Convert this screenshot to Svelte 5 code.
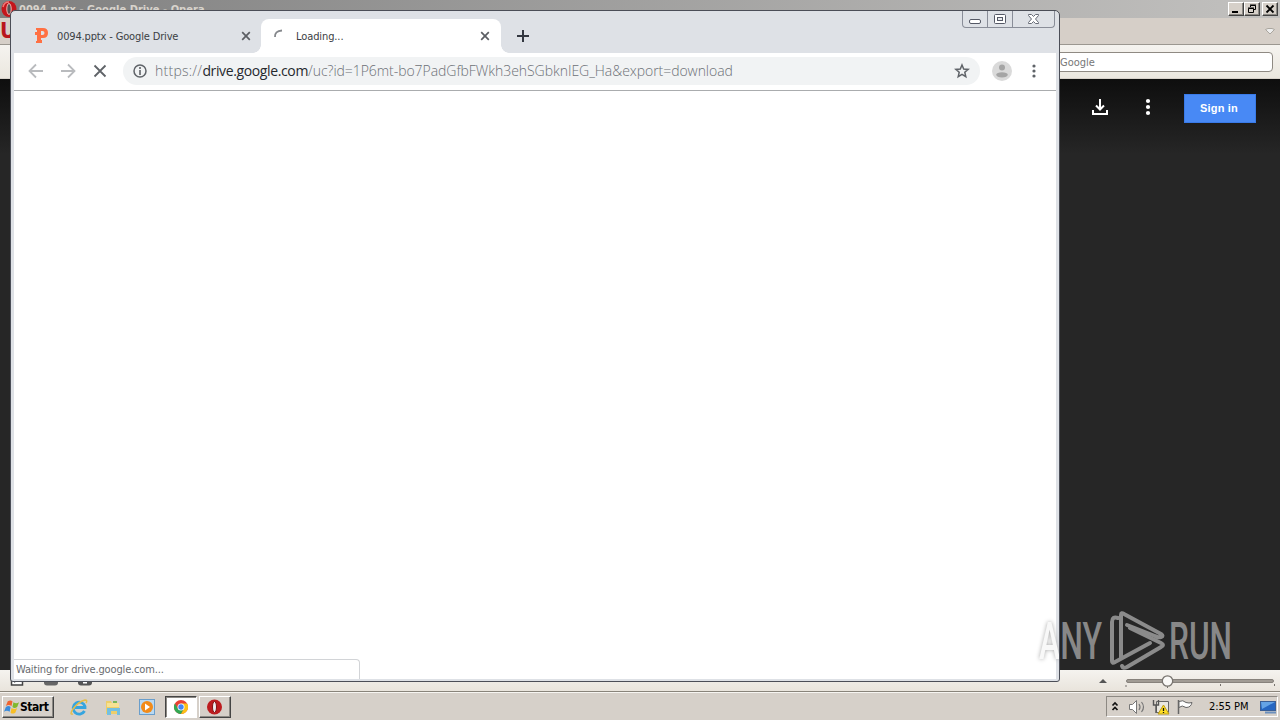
<script lang="ts">
	const url = {
		scheme: 'https://',
		host: 'drive.google.com',
		path: '/uc?id=1P6mt-bo7PadGfbFWkh3ehSGbknIEG_Ha&export=download'
	};
</script>

<div class="desktop">
	<div class="opera">
		<header class="opera-title">
			<svg class="opera-logo" width="18" height="18" viewBox="0 0 18 18">
				<ellipse cx="9" cy="9" rx="7.5" ry="8" fill="#c4161c" />
				<path d="M3 7q1-5 6-5" fill="none" stroke="#ee7b78" stroke-width="1.500" />
				<ellipse cx="9" cy="9" rx="2.2" ry="5.5" fill="#555" stroke="#f9b3b0" />
			</svg>
			<span class="opera-name">0094.pptx - Google Drive - Opera</span>
			<div class="opera-controls">
				<button aria-label="Minimize"><svg width="14" height="12"><path d="M3 9h6" stroke="#000" stroke-width="2" /></svg></button>
				<button aria-label="Restore"><svg width="14" height="12"><path d="M5.500 4V2.500h5v4H9M3.500 5.500h5v4h-5zM5 2h6M3 5h6" fill="none" stroke="#000" /></svg></button>
				<button class="gap" aria-label="Close"><svg width="14" height="12"><path d="M3.500 2.500l7 7M10.500 2.500l-7 7" stroke="#000" stroke-width="1.800" /></svg></button>
			</div>
		</header>
		<div class="opera-tabs">
			<span class="opera-menu">U</span>
			<svg width="12" height="8" viewBox="0 0 12 8"><path d="M1.500 2.500L4 1.500h4l2.500 1L6 7z" fill="#eee" stroke="#aaa69f" /></svg>
		</div>
		<div class="opera-toolbar"><div class="search">Google</div></div>
		<main class="viewer">
			<svg class="download" width="20" height="20" viewBox="0 0 20 20"><path d="M10 2v10M6 8.500l4 4 4-4M3 13v4h14v-4" fill="none" stroke="#fff" stroke-width="2" /></svg>
			<svg class="more" width="6" height="18" viewBox="0 0 6 18" fill="#fff"><circle cx="3" cy="3" r="2.100" /><circle cx="3" cy="9" r="2.100" /><circle cx="3" cy="15" r="2.100" /></svg>
			<button class="signin">Sign in</button>
		</main>
		<footer class="opera-status">
			<svg class="status-icons" width="100" height="21">
				<path d="M11.500 5h11v10h-11zM14 12l5-3" fill="#fff" stroke="#444" stroke-width="1.500" />
				<rect x="44" y="5" width="14" height="10.500" rx="3" fill="#666" />
				<rect x="78" y="5" width="14" height="10.500" rx="3" fill="#555" />
				<path d="M83 12.500h4" stroke="#fff" stroke-width="2" />
			</svg>
			<svg class="zoom-slider" width="185" height="21" viewBox="0 0 185 21">
				<path d="M4 13l4-4 4 4z" fill="#555" />
				<rect x="31.500" y="9.500" width="147" height="3" rx="1.500" fill="#a09b94" stroke="#87827c" />
				<path d="M31 15v2M72.500 15v3M125.500 14v2M179.500 14v2" stroke="#77736e" />
				<circle cx="72.500" cy="11" r="5.200" fill="#faf9f7" stroke="#77736e" stroke-width="1.300" />
			</svg>
		</footer>
	</div>

	<div class="taskbar">
		<button class="start">
			<svg width="16" height="16" viewBox="0 0 17 16">
				<path d="M4 2q3-2 5 0L8 7Q5 5 2 7z" fill="#ef6431" />
				<path d="M10 3q3 2 6 0l-2 5q-3 2-5 0z" fill="#80b82d" />
				<path d="M2 8q3-2 5 0l-1 5Q3 11 0 13z" fill="#398bdc" />
				<path d="M8 9q3 2 6 0l-2 5q-3 2-5 0z" fill="#f8be25" />
			</svg>
			<span>Start</span>
		</button>
		<div class="quick">
			<svg width="18" height="18" viewBox="0 0 18 18">
				<path d="M14.500 13A6 6 0 1 1 15 8.500v1H5" fill="none" stroke="#36a5df" stroke-width="2.800" />
				<path d="M3 16Q-1 17 3 11 8 4 15 2q3 0 1 3" fill="none" stroke="#e6bd47" stroke-width="1.400" />
			</svg>
			<svg width="18" height="18" viewBox="0 0 18 18">
				<path d="M2 3h5l1 2h7v11H2z" fill="#edce6a" />
				<path d="M3 6h12M3 8h12" stroke="#fff5bd" />
				<path d="M3 10h13v7h-3v-4H7v4H3z" fill="#73bfe2" />
				<path d="M9 3h4v2H9z" fill="#79b55b" />
			</svg>
			<svg width="18" height="18" viewBox="0 0 18 18">
				<rect x="1.500" y="1.500" width="15" height="15" fill="#b9d9f2" stroke="#6a9ecb" />
				<circle cx="9" cy="9" r="6" fill="#f28b19" />
				<path d="M7 5.500v7L12 9z" fill="#fff" />
			</svg>
		</div>
		<div class="task pressed">
			<svg width="16" height="16" viewBox="0 0 16 16">
				<circle cx="8" cy="8" r="7" fill="#e84133" />
				<path d="M1.900 4.500A7 7 0 0 0 8 15l3-5.300H5z" fill="#31a853" />
				<path d="M8 15a7 7 0 0 0 6.100-10.500H8l3 5.200z" fill="#fbc116" />
				<circle cx="8" cy="8" r="3.500" fill="#fff" /><circle cx="8" cy="8" r="2.700" fill="#4385f4" />
			</svg>
		</div>
		<div class="task">
			<svg width="16" height="16" viewBox="0 0 16 16">
				<ellipse cx="7.500" cy="8" rx="7.500" ry="7.500" fill="#bd1b1e" />
				<ellipse cx="7.500" cy="8" rx="2" ry="5.500" fill="#eee" stroke="#801012" />
			</svg>
		</div>
		<div class="tray">
			<svg class="tray-icons" width="90" height="20" viewBox="0 0 90 20">
				<path d="M5.500 8.500L8 6l2.500 2.500M5.500 13L8 10.500l2.500 2.500" fill="none" stroke="#111" stroke-width="1.700" />
				<path d="M22.500 7.500h3l4-4v13l-4-4h-3z" fill="#fff" stroke="#777" />
				<path d="M32 7q2 3 0 6M34.500 5q4 5 0 10" fill="none" stroke="#777" stroke-width="1.200" />
				<path d="M49.500 4.500h12v11h-12z" fill="#e9e7e0" stroke="#666" />
				<path d="M46.500 3v5h5V3M49 8v8" fill="none" stroke="#555" stroke-width="1.400" />
				<path d="M56.500 8L62 17H51z" fill="#ffdf24" stroke="#bd9c18" />
				<path d="M56.500 11v3M56.500 15v1" stroke="#111" stroke-width="1.300" />
				<path d="M71.500 17V3" stroke="#666" stroke-width="1.500" />
				<path d="M72 4.500q4-2 7 1 3 1 6 0-1 5-6 5-4-3-7 0z" fill="#fff" stroke="#666" />
			</svg>
			<span class="clock">2:55 PM</span>
			<svg class="show-desktop" width="17" height="16" viewBox="0 0 17 16">
				<rect x=".5" y="2.500" width="15" height="9" fill="#2667c2" stroke="#3a5f96" />
				<path d="M1 3h14L2 10z" fill="#65a4e6" />
				<path d="M5 13.500h11" stroke="#6c90bd" stroke-width="2" />
			</svg>
		</div>
	</div>

	<section class="chrome">
		<div class="window-controls">
			<span class="min"><svg width="24" height="16"><rect x="6.500" y="8.500" width="11" height="4" rx="1.500" fill="#fff" stroke="#555966" /></svg></span>
			<span class="max"><svg width="24" height="16"><rect x="6.500" y="3.500" width="11" height="9" rx="1" fill="#fff" stroke="#555966" /><rect x="9.500" y="6.500" width="5" height="3" fill="#e8eaed" stroke="#555966" /></svg></span>
			<span class="close"><svg width="41" height="16"><path d="M15.500 3.500h3l2 2 2-2h3v1l-3 3.500 3 3.500v1h-3l-2-2-2 2h-3v-1l3-3.500-3-3.500z" fill="#fff" stroke="#666b76" /></svg></span>
		</div>
		<div class="tabs">
			<div class="tab drive-tab">
				<svg width="16" height="18" viewBox="0 0 16 18"><path d="M3 1h7q5 0 5 5t-5 5H8v2h1v3H3v-2h1V8H2V5h2V3H3z" fill="#ff7043" /><path d="M8 4h1.500q2 0 2 2t-2 2H8z" fill="#dee1e6" /></svg>
				<span class="tab-title">0094.pptx - Google Drive</span>
				<svg class="x" width="10" height="10"><path d="M1.200 1.200l7.600 7.600M8.800 1.200L1.200 8.800" stroke="#5b5e63" stroke-width="1.700" /></svg>
			</div>
			<div class="tab active">
				<svg width="16" height="16"><path d="M2 9Q1.500 3 9 2.500" fill="none" stroke="#85888c" stroke-width="1.800" /></svg>
				<span class="tab-title loading">Loading...</span>
				<svg class="x" width="10" height="10"><path d="M1.200 1.200l7.600 7.600M8.800 1.200L1.200 8.800" stroke="#5b5e63" stroke-width="1.700" /></svg>
			</div>
			<svg class="plus" width="12" height="12"><path d="M6 0v12M0 6h12" stroke="#333740" stroke-width="2" /></svg>
		</div>
		<div class="toolbar">
			<svg class="nav" width="92" height="18" viewBox="0 0 92 18" fill="none" stroke-width="1.800">
				<path d="M16 9H3M9 2.500L2.500 9 9 15.500M34 9h13M41 2.500L47.500 9 41 15.500" stroke="#b9bbbe" />
				<path d="M67.500 3.500L78.500 14.500M78.500 3.500L67.500 14.500" stroke="#5f6368" />
			</svg>
			<div class="address">
				<svg width="16" height="16" viewBox="0 0 16 16"><circle cx="8" cy="8" r="6" fill="none" stroke="#5f6368" stroke-width="1.500" /><path d="M8 4v2M8 7v5" stroke="#5f6368" stroke-width="1.600" /></svg>
				<span class="url"><span class="scheme">{url.scheme}</span><b>{url.host}</b><span class="path">{url.path}</span></span>
				<svg class="star" width="16" height="16" viewBox="0 0 16 16"><path d="M8 2l1.700 4 4.500.4-3.400 2.900 1 4.400L8 11.400l-3.800 2.300 1-4.400-3.400-2.900 4.500-.4z" fill="none" stroke="#5f6368" stroke-width="1.500" /></svg>
			</div>
			<svg class="avatar" width="20" height="20"><circle cx="10" cy="10" r="10" fill="#dadada" /><circle cx="10" cy="6.500" r="3" fill="#a5a5a5" /><ellipse cx="10" cy="13.800" rx="5.800" ry="2.600" fill="#a5a5a5" /></svg>
			<svg class="menu" width="4" height="14" fill="#5f6368"><circle cx="2" cy="2" r="1.600" /><circle cx="2" cy="7" r="1.600" /><circle cx="2" cy="12" r="1.600" /></svg>
		</div>
		<div class="page"><div class="waiting">Waiting for drive.google.com...</div></div>
	</section>

	<svg class="watermark" width="230" height="80" viewBox="0 0 230 80">
		<defs>
			<clipPath id="over-page"><rect width="28" height="80" /></clipPath>
			<clipPath id="over-dark"><rect x="29" width="180" height="80" /></clipPath>
		</defs>
		<text class="brand shadow" x="8" y="54" textLength="63" lengthAdjust="spacingAndGlyphs" clip-path="url(#over-page)">ANY</text>
		<text class="brand" x="8" y="54" textLength="63" lengthAdjust="spacingAndGlyphs" clip-path="url(#over-dark)">ANY</text>
		<text class="brand" x="138" y="54" textLength="63" lengthAdjust="spacingAndGlyphs">RUN</text>
		<g class="play">
			<path d="M87 13q-6-2-6 4v39q0 3 3 1l35-19" />
			<path d="M90 53V10q0-3 3-1l37 20q3 2 0 3t-6-1L96 20" />
			<path d="M99 23l31 15q4 2 0 4L96 62q-4 2-5-1" />
		</g>
	</svg>
</div>

<style>
	:global(body) {
		margin: 0;
		overflow: hidden;
	}

	.desktop {
		position: relative;
		width: 1280px;
		height: 720px;
		display: flex;
		flex-direction: column;
		overflow: hidden;
		background: #d6d0c9;
		font-family: 'DejaVu Sans Condensed', 'DejaVu Sans', sans-serif;
		font-size: 11px;
	}

	svg {
		display: block;
		flex: none;
	}

	.opera {
		height: 692px;
		display: flex;
		flex-direction: column;
		box-sizing: border-box;
		border-bottom: 1px solid #89847a;
	}

	.opera-title {
		height: 18px;
		display: flex;
		align-items: center;
		background: linear-gradient(90deg, #808080, #c2c1bf);
	}

	.opera-logo {
		margin-left: 0;
	}

	.opera-name {
		flex: 1;
		margin-left: 1px;
		font-weight: bold;
		color: #d8d3cc;
		letter-spacing: 0.04px;
	}

	.opera-controls {
		display: flex;
		padding-right: 2px;
	}

	.opera-controls button {
		width: 16px;
		height: 14px;
		padding: 0;
		border: 1px solid;
		border-color: #fff #444 #444 #fff;
		background: #d6d0c9;
		box-shadow: inset -1px -1px #8c8984;
	}

	.opera-controls button.gap {
		margin-left: 2px;
	}

	.opera-tabs {
		height: 26px;
		display: flex;
		justify-content: space-between;
		align-items: center;
		padding-right: 4px;
		background: #d6cfc8;
		border-bottom: 1px solid #9b9790;
	}

	.opera-menu {
		color: #b9151c;
		font-size: 22px;
		line-height: 24px;
		font-weight: bold;
	}

	.opera-toolbar {
		height: 33px;
		display: flex;
		justify-content: flex-end;
		align-items: center;
		padding-right: 7px;
		border-bottom: 1px solid #d8d2ca;
		background: linear-gradient(#f5f3ef, #ebe7df);
	}

	.search {
		width: 212px;
		height: 18px;
		padding-left: 8px;
		border: 1px solid #8f8a83;
		border-radius: 4px;
		background: #fff;
		color: #777;
		line-height: 19px;
	}

	.viewer {
		flex: 1;
		display: flex;
		align-items: flex-start;
		justify-content: flex-end;
		padding: 15px 24px 0 0;
		background: linear-gradient(#0e0e0e, #262626 75px);
	}

	.download {
		margin: 3px 35px 0 0;
	}

	.more {
		margin: 4px 33px 0 0;
	}

	.signin {
		width: 72px;
		height: 29px;
		padding: 0 2px 1px 0;
		border: 1px solid #397ae8;
		background: #4889f5;
		color: #fff;
		font: bold 11px 'Liberation Sans', sans-serif;
		letter-spacing: 0.2px;
	}

	.opera-status {
		height: 21px;
		display: flex;
		justify-content: space-between;
		background: linear-gradient(#f5f3ef, #e9e4dc);
	}

	.taskbar {
		flex: 1;
		display: flex;
		align-items: flex-start;
		box-sizing: border-box;
		padding: 3px 2px 0;
		border-top: 1px solid #f7f5f1;
		background: #d6d0c9;
	}

	.start,
	.task {
		height: 22px;
		box-sizing: border-box;
		display: flex;
		align-items: center;
		border: 1px solid;
		border-color: #fff #444 #444 #fff;
		box-shadow: inset -1px -1px #8c8984;
		background: #d6d0c9;
	}

	.start {
		width: 52px;
		padding: 0 1px;
		font: bold 12px 'DejaVu Sans Condensed', sans-serif;
		letter-spacing: -0.45px;
		color: #000;
	}

	.quick {
		display: flex;
		gap: 16px;
		padding: 2px 9px 0 16px;
	}

	.task {
		width: 32px;
		justify-content: center;
		margin-right: 2px;
	}

	.task.pressed {
		background: #fff;
		border-color: #444 #fff #fff #444;
		box-shadow: inset 1px 1px #8c8984;
	}

	.tray {
		width: 172px;
		height: 21px;
		box-sizing: border-box;
		display: flex;
		align-items: center;
		border: 1px solid;
		border-color: #8d8983 #fff #fff #8d8983;
		margin-left: auto;
	}

	.clock {
		width: 48px;
		margin-left: 12px;
		color: #000;
		letter-spacing: -0.05px;
		white-space: nowrap;
	}

	.show-desktop {
		margin-left: 3px;
	}

	.chrome {
		position: absolute;
		left: 10px;
		top: 10px;
		width: 1050px;
		height: 672px;
		box-sizing: border-box;
		display: flex;
		flex-direction: column;
		padding: 0 3px 2px;
		border: 1px solid #4b4e57;
		border-radius: 5px 5px 3px 3px;
		background: #dee1e6;
	}

	.window-controls {
		position: absolute;
		right: 4px;
		top: 0;
		display: flex;
		height: 16px;
		border: 1px solid #898d98;
		border-top: 0;
		border-radius: 0 0 4px 4px;
	}

	.window-controls .max {
		border: 1px solid #898d98;
		border-width: 0 1px;
	}

	.tabs {
		height: 42px;
		display: flex;
		align-items: flex-end;
	}

	.tab {
		height: 34px;
		display: flex;
		align-items: center;
		box-sizing: border-box;
		color: #3b3e44;
	}

	.drive-tab {
		width: 247px;
		padding: 0 10px 0 19px;
	}

	.tab-title {
		margin-left: 8px;
		letter-spacing: -0.15px;
		white-space: nowrap;
	}

	.loading {
		margin-left: 7px;
		letter-spacing: -0.1px;
	}

	.x {
		margin-left: auto;
	}

	.active {
		position: relative;
		width: 240px;
		padding: 0 11px 0 12px;
		background: #fff;
		border-radius: 8px 8px 0 0;
	}

	.active::before,
	.active::after {
		content: '';
		position: absolute;
		bottom: 0;
		width: 8px;
		height: 8px;
	}

	.active::before {
		left: -8px;
		background: radial-gradient(circle at 0 0, transparent 7.5px, #fff 8px);
	}

	.active::after {
		right: -8px;
		background: radial-gradient(circle at 100% 0, transparent 7.5px, #fff 8px);
	}

	.plus {
		margin: 0 0 11px 16px;
	}

	.toolbar {
		height: 37px;
		display: flex;
		align-items: center;
		background: #fff;
		border-bottom: 1px solid #aaacae;
	}

	.toolbar > * {
		position: relative;
		top: -1px;
	}

	.nav {
		margin: 0 4px 0 13px;
	}

	.address {
		width: 857px;
		height: 28px;
		display: flex;
		align-items: center;
		box-sizing: border-box;
		padding: 0 10px 0 9px;
		border-radius: 14px;
		background: #f1f3f4;
	}

	.url {
		margin-left: 7px;
		font: 300 14px 'Open Sans', sans-serif;
		color: #6d7176;
		white-space: nowrap;
	}

	.url .scheme {
		letter-spacing: 0.25px;
	}

	.url b {
		font-weight: 400;
		color: #25282d;
		letter-spacing: -0.37px;
	}

	.url .path {
		letter-spacing: -0.05px;
	}

	.star {
		margin-left: auto;
	}

	.avatar {
		margin-left: 12px;
	}

	.menu {
		margin-left: 20px;
	}

	.page {
		flex: 1;
		display: flex;
		align-items: flex-end;
		background: #fff;
	}

	.waiting {
		width: 343px;
		height: 19px;
		padding-left: 2px;
		border: 1px solid #d2d4d7;
		border-width: 1px 1px 0 0;
		border-radius: 0 4px 0 0;
		color: #686b6f;
		line-height: 19px;
		letter-spacing: -0.15px;
	}

	.watermark {
		position: absolute;
		left: 1031px;
		top: 605px;
	}

	.brand {
		font: 500 51px Roboto, sans-serif;
		fill: #888;
	}

	.shadow {
		fill: #f8f8f8;
		filter: drop-shadow(0 0 2px #aaa);
	}

	.play {
		fill: none;
		stroke: #8b8b8b;
		stroke-width: 4;
		stroke-linejoin: round;
		stroke-linecap: round;
	}
</style>
